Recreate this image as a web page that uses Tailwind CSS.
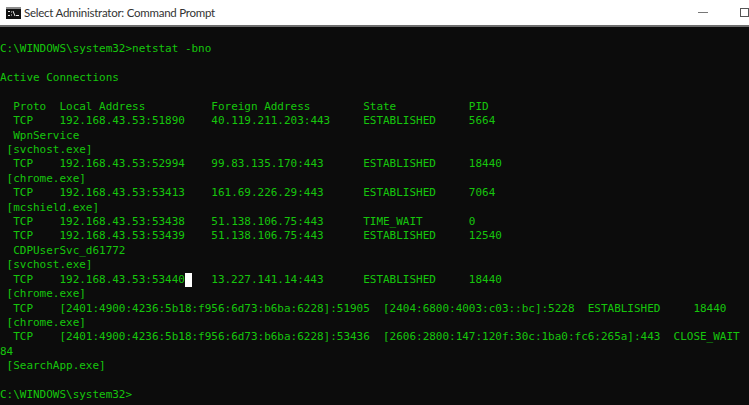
<!DOCTYPE html>
<html lang="en">
<head>
  <meta charset="UTF-8" />
  <title>Command Prompt</title>
  <script src="https://cdn.jsdelivr.net/npm/@tailwindcss/browser@4"></script>
</head>
<body class="w-[749px] h-[405px] overflow-hidden bg-[#0c0c0c]">
  <!-- title bar -->
  <div class="h-[27px] bg-white border-b-2 border-[#6e6e6e] flex items-center pl-[6px] relative">
    <svg width="15" height="12" viewBox="0 0 15 12" class="mr-[3px]">
      <rect x="0" y="0" width="15" height="12" fill="#111" />
      <rect x="0" y="0" width="15" height="2" fill="#8c8c8c" />
      <path d="M2 4.500h2M2 8.500h2M5.500 4.500v1M5.500 7.500v1M7 4l2 5" fill="none" stroke="#e8e8e8" stroke-width="1" />
      <rect x="10" y="8" width="3" height="1" fill="#e8e8e8" />
    </svg>
    <span class="text-[#333] text-[11.5px] tracking-[-0.25px] font-['Lato',sans-serif]">Select Administrator: Command Prompt</span>
    <div class="absolute top-[12px] left-[698px] w-[10px] h-px bg-[#777]"></div>
    <div class="absolute top-[8px] left-[740px] w-[9px] h-[9px] border border-[#555]"></div>
  </div>
  <!-- console -->
  <pre class="pt-[15px] text-[#16c60c] bg-[#0c0c0c] text-[10.97px] leading-[14.42px] font-['DejaVu_Sans_Mono',monospace]">C:\WINDOWS\system32&gt;netstat -bno

Active Connections

  Proto  Local Address          Foreign Address        State           PID
  TCP    192.168.43.53:51890    40.119.211.203:443     ESTABLISHED     5664
  WpnService
 [svchost.exe]
  TCP    192.168.43.53:52994    99.83.135.170:443      ESTABLISHED     18440
 [chrome.exe]
  TCP    192.168.43.53:53413    161.69.226.29:443      ESTABLISHED     7064
 [mcshield.exe]
  TCP    192.168.43.53:53438    51.138.106.75:443      TIME_WAIT       0
  TCP    192.168.43.53:53439    51.138.106.75:443      ESTABLISHED     12540
  CDPUserSvc_d61772
 [svchost.exe]
  TCP    192.168.43.53:53440<span class="inline-block w-[6.600px] h-[14px] bg-white align-middle"></span>   13.227.141.14:443      ESTABLISHED     18440
 [chrome.exe]
  TCP    [2401:4900:4236:5b18:f956:6d73:b6ba:6228]:51905  [2404:6800:4003:c03::bc]:5228  ESTABLISHED     18440
 [chrome.exe]
  TCP    [2401:4900:4236:5b18:f956:6d73:b6ba:6228]:53436  [2606:2800:147:120f:30c:1ba0:fc6:265a]:443  CLOSE_WAIT
84
 [SearchApp.exe]

C:\WINDOWS\system32&gt;</pre>
</body>
</html>
